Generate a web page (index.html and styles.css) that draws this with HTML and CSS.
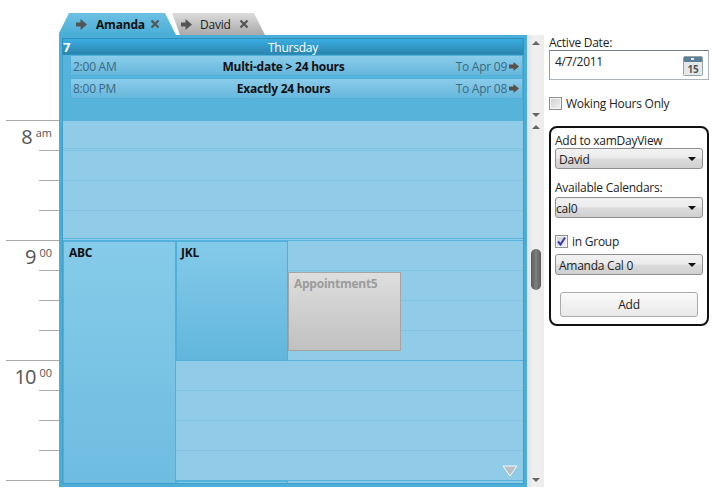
FILE: index.html
```html
<!DOCTYPE html>
<html lang="en">
<head>
    <meta charset="UTF-8">
    <meta name="viewport" content="width=device-width, initial-scale=1.0">
    <title>xamDayView Groups</title>
    <link rel="stylesheet" href="styles.css">
</head>
<body>
    <div class="page">
        <div class="time-col">
            <div class="hour"><span class="big">8</span><span class="small">am</span></div>
            <div class="hour"><span class="big">9</span><span class="small">00</span></div>
            <div class="hour"><span class="big">10</span><span class="small">00</span></div>
            <div class="hour-end"></div>
        </div>

        <div class="scheduler">
            <div class="tabs">
                <div class="tab tab-active">
                    <svg class="tab-arrow" width="11" height="11" viewBox="0 0 11 11"><path d="M0 3.5h4.5V0L11 5.5 4.5 11V7.5H0z"/></svg>
                    <span class="tab-name">Amanda</span>
                    <svg class="tab-close" width="10" height="10" viewBox="0 0 10 10"><path d="M1.5 1.5l7 7M8.5 1.5l-7 7"/></svg>
                </div>
                <div class="tab tab-other">
                    <svg class="tab-arrow" width="11" height="11" viewBox="0 0 11 11"><path d="M0 3.5h4.5V0L11 5.5 4.5 11V7.5H0z"/></svg>
                    <span class="tab-name">David</span>
                    <svg class="tab-close" width="10" height="10" viewBox="0 0 10 10"><path d="M1.5 1.5l7 7M8.5 1.5l-7 7"/></svg>
                </div>
            </div>
            <div class="calendar">
                <div class="day-head"><span class="day-num">7</span><span class="day-name">Thursday</span></div>
                <div class="all-day">
                    <div class="event">
                        <span class="event-time">2:00 AM</span>
                        <span class="event-title">Multi-date &gt; 24 hours</span>
                        <span class="event-to">To Apr 09 <svg width="10" height="9" viewBox="0 0 10 9"><path d="M0 2.5h4.5V0L10 4.5 4.5 9V6.5H0z"/></svg></span>
                    </div>
                    <div class="event">
                        <span class="event-time">8:00 PM</span>
                        <span class="event-title">Exactly 24 hours</span>
                        <span class="event-to">To Apr 08 <svg width="10" height="9" viewBox="0 0 10 9"><path d="M0 2.5h4.5V0L10 4.5 4.5 9V6.5H0z"/></svg></span>
                    </div>
                </div>
                <div class="day-grid">
                    <div class="appt appt-abc">ABC</div>
                    <div class="appt appt-jkl">JKL</div>
                    <div class="appt appt-grey">Appointment5</div>
                    <div class="appt appt-next"></div>
                    <svg class="more-down" width="16" height="12" viewBox="0 0 16 12"><path d="M1 1h14l-7 10z"/></svg>
                </div>
            </div>
        </div>

        <div class="scrollbars">
            <div class="scroll-top">
                <span class="arrow-up"></span>
                <span class="arrow-down"></span>
            </div>
            <div class="scroll-main">
                <span class="arrow-up"></span>
                <span class="thumb"></span>
                <span class="arrow-down"></span>
            </div>
        </div>

        <div class="side">
            <label class="field-label">Active Date:</label>
            <div class="date-input">
                <span>4/7/2011</span>
                <svg width="20" height="20" viewBox="0 0 20 20">
                    <rect x="0.5" y="0.5" width="19" height="19" rx="1" fill="#e4e8ea" stroke="#9aa3a8"/>
                    <rect x="1" y="1" width="18" height="5" fill="#5c7f99"/>
                    <rect x="8" y="2" width="3" height="2" fill="#e8eef2"/>
                    <text x="10" y="17" text-anchor="middle" class="cal-num">15</text>
                </svg>
            </div>
            <div class="check-row hours-row">
                <span class="check"></span>
                <span>Woking Hours Only</span>
            </div>
            <div class="add-box">
                <div class="field-label">Add to xamDayView</div>
                <div class="combo"><span>David</span><i></i></div>
                <div class="field-label gap-label">Available Calendars:</div>
                <div class="combo combo-tight"><span>cal0</span><i></i></div>
                <div class="check-row group-row">
                    <span class="check check-on">
                        <svg width="11" height="11" viewBox="0 0 11 11"><path d="M2 5.5l2.5 3L9 1.5"/></svg>
                    </span>
                    <span>in Group</span>
                </div>
                <div class="combo"><span>Amanda Cal 0</span><i></i></div>
                <button class="add-btn">Add</button>
            </div>
        </div>
    </div>
</body>
</html>
```

FILE: styles.css
```css
* {
    box-sizing: border-box;
}

body {
    margin: 0;
    background: #fff;
    font-family: "Open Sans", "Noto Sans", sans-serif;
    font-size: 12px;
    letter-spacing: -0.25px;
    color: #222;
    overflow: hidden;
}

.page {
    display: flex;
    width: 715px;
    height: 500px;
    padding-top: 13px;
}

/* time ruler */
.time-col {
    width: 59px;
    flex: none;
    padding-top: 107px;
}

.hour {
    height: 120px;
    display: flex;
    justify-content: flex-end;
    align-items: flex-start;
    gap: 4px;
    padding-right: 7px;
    color: #555;
    margin-left: 6px;
    border-top: 1px solid #aaa;
    background:
        linear-gradient(#aaa, #aaa) right 29px / 20px 1px no-repeat,
        linear-gradient(#aaa, #aaa) right 59px / 20px 1px no-repeat,
        linear-gradient(#aaa, #aaa) right 89px / 20px 1px no-repeat;
}

.big {
    font-size: 20px;
    letter-spacing: -1px;
    line-height: 27px;
    margin-top: 2px;
}

.small {
    font-size: 11px;
    letter-spacing: 0;
    line-height: 14px;
    margin-top: 5px;
}

.hour-end {
    border-top: 1px solid #aaa;
    margin-left: 6px;
}

/* tabs + day */
.scheduler {
    width: 468px;
    flex: none;
}

.tabs {
    display: flex;
    height: 22px;
}

.tab {
    display: flex;
    align-items: center;
    height: 22px;
}

.tab-active {
    width: 117px;
    padding-left: 17px;
    font-weight: 700;
    color: #111;
    background: linear-gradient(#6dc0e3, #4aaed8);
    clip-path: polygon(0 100%, 0 20px, 10px 0, 106px 0, 117px 100%);
    position: relative;
    z-index: 1;
}

.tab-other {
    width: 96px;
    margin-left: -7px;
    padding-left: 12px;
    color: #222;
    background: linear-gradient(#dcdcdc, #a9a9a9);
    clip-path: polygon(3px 0, 85px 0, 96px 100%, 11px 100%);
}

.tab-arrow {
    fill: #555;
    flex: none;
}

.tab-name {
    margin-left: 9px;
    width: 54px;
    letter-spacing: -0.2px;
}

.tab-other .tab-name {
    margin-left: 8px;
    width: 39px;
}

.tab-close {
    stroke: #555;
    stroke-width: 2.2;
    fill: none;
    flex: none;
}

.calendar {
    height: 452px;
    background: #4aaed8;
    padding: 3px;
    display: flex;
    flex-direction: column;
}

.day-head {
    height: 17px;
    flex: none;
    display: flex;
    align-items: center;
    padding-top: 1px;
    color: #fff;
    background: linear-gradient(#3aaee3, #2b85ae);
    border: 1px solid #2e8dba;
}

.day-num {
    width: 205px;
    font-size: 13px;
    font-weight: 700;
}

.day-name {
    font-size: 12px;
}

.all-day {
    height: 66px;
    flex: none;
    background: #56b3da;
    padding: 0 0 0 7px;
    border-left: 1px solid #3f9fc9;
    border-right: 1px solid #3f9fc9;
}

.event {
    height: 21px;
    margin-bottom: 2px;
    display: grid;
    grid-template-columns: 54px 1fr 79px;
    align-items: center;
    padding: 1px 3px 0 2px;
    color: #3a6a80;
    background: linear-gradient(#8accea, #66b7dd);
    border: 1px solid #4fb0da;
}

.event + .event {
    padding-top: 0;
}

.event-title {
    font-weight: 700;
    color: #111;
    text-align: center;
}

.event-to {
    justify-self: end;
    display: flex;
    align-items: center;
    gap: 2px;
    white-space: nowrap;
}

.event-to svg {
    fill: #5a5048;
}

.day-grid {
    flex: 1;
    display: grid;
    grid-template-columns: 113px 112px 113px 1fr;
    grid-template-rows: repeat(37, 10px);
    background-color: #90cbe7;
    background-image:
        repeating-linear-gradient(#55b2da 0 1px, transparent 1px 120px),
        repeating-linear-gradient(#7fc5e3 0 1px, transparent 1px 30px);
    background-position: 0 119px, 0 29px;
    border-left: 1px solid #3f9fc9;
    border-right: 1px solid #3f9fc9;
    border-bottom: 1px solid #3f9fc9;
    position: relative;
    overflow: hidden;
}

.appt {
    font-weight: 700;
    color: #111;
    padding: 2px 5px;
    border: 1px solid #4fb0da;
}

.appt-abc {
    grid-column: 1;
    grid-row: 13 / 38;
    background: linear-gradient(#86cbe9, #6dbce0);
}

.appt-jkl {
    grid-column: 2;
    grid-row: 13 / 25;
    padding-left: 4px;
    background: linear-gradient(#84cae9, #62b6dd);
}

.appt-grey {
    grid-column: 3;
    grid-row: 16 / 24;
    margin-top: 1px;
    color: #9c9c9c;
    background: linear-gradient(#dedede, #c0c0c0);
    border-color: #a5a5a5;
}

.appt-next {
    grid-column: 2;
    grid-row: 37;
    padding: 0;
    background: #86cbe9;
}

.more-down {
    position: absolute;
    right: 5px;
    bottom: 6px;
    fill: #b9c2c7;
    stroke: #f4f8fa;
    stroke-width: 1;
}

/* scrollbars */
.scrollbars {
    width: 17px;
    flex: none;
    margin: 22px 0 13px 0;
    display: flex;
    flex-direction: column;
    background: linear-gradient(90deg, #e2e2e2, #f0f0f0 40%, #ececec);
}

.scroll-top {
    height: 86px;
    flex: none;
    display: flex;
    flex-direction: column;
    justify-content: space-between;
    align-items: center;
    padding: 6px 0 4px 1px;
}

.scroll-main {
    flex: 1;
    display: flex;
    flex-direction: column;
    align-items: center;
    padding: 4px 0 5px 1px;
}

.arrow-up,
.arrow-down {
    width: 0;
    height: 0;
    border-left: 4px solid transparent;
    border-right: 4px solid transparent;
}

.arrow-up {
    border-bottom: 4px solid #666;
}

.arrow-down {
    border-top: 4px solid #666;
}

.thumb {
    width: 10px;
    height: 41px;
    margin-top: 120px;
    margin-bottom: auto;
    border-radius: 5px;
    background: linear-gradient(90deg, #5a5a5a, #808080 50%, #5a5a5a);
}

/* right panel */
.side {
    width: 160px;
    flex: none;
    margin-left: 5px;
    padding-top: 22px;
}

.field-label {
    display: block;
    line-height: 15px;
}

.date-input {
    height: 30px;
    padding: 2px 5px;
    display: flex;
    justify-content: space-between;
    align-items: flex-start;
    border: 1px solid;
    border-color: #6b7a84 #a9b4ba #a9b4ba #8d9aa2;
}

.date-input svg {
    margin-top: 3px;
}

.cal-num {
    font-size: 10px;
    font-weight: 700;
    fill: #555;
}

.check-row {
    display: flex;
    align-items: center;
    gap: 4px;
    line-height: 16px;
}

.hours-row {
    margin-top: 16px;
}

.check {
    width: 13px;
    height: 13px;
    flex: none;
    margin-top: -1px;
    border: 1px solid #8e8f8f;
    box-shadow: inset 0 0 0 1px #f4f4f4;
    background: linear-gradient(135deg, #cfcfcf, #f2f2f2);
    display: flex;
    align-items: center;
    justify-content: center;
}

.check-on path {
    stroke: #3a3ab0;
    stroke-width: 2;
    fill: none;
}

.add-box {
    width: 160px;
    height: 200px;
    margin-top: 14px;
    padding: 5px 4px 0;
    border: 2px solid #111;
    border-radius: 8px;
}

.combo {
    height: 21px;
    padding: 1px 4px 0 3px;
    display: flex;
    justify-content: space-between;
    align-items: center;
    border: 1px solid #8f8f8f;
    border-radius: 3px;
    background: linear-gradient(#f2f2f2 0, #ebebeb 48%, #dcdcdc 52%, #cfcfcf);
}

.combo-tight {
    padding-left: 0;
}

.combo i {
    width: 0;
    height: 0;
    margin-right: 2px;
    border-left: 4px solid transparent;
    border-right: 4px solid transparent;
    border-top: 4px solid #111;
}

.gap-label {
    margin-top: 11px;
    margin-bottom: 2px;
}

.group-row {
    margin-top: 16px;
    margin-bottom: 4px;
}

.add-btn {
    display: block;
    width: 138px;
    height: 25px;
    margin: 17px 0 0 5px;
    font: inherit;
    letter-spacing: inherit;
    color: #222;
    border: 1px solid #aaa;
    border-radius: 3px;
    background: linear-gradient(#fafafa, #e8e8e8);
}
```
